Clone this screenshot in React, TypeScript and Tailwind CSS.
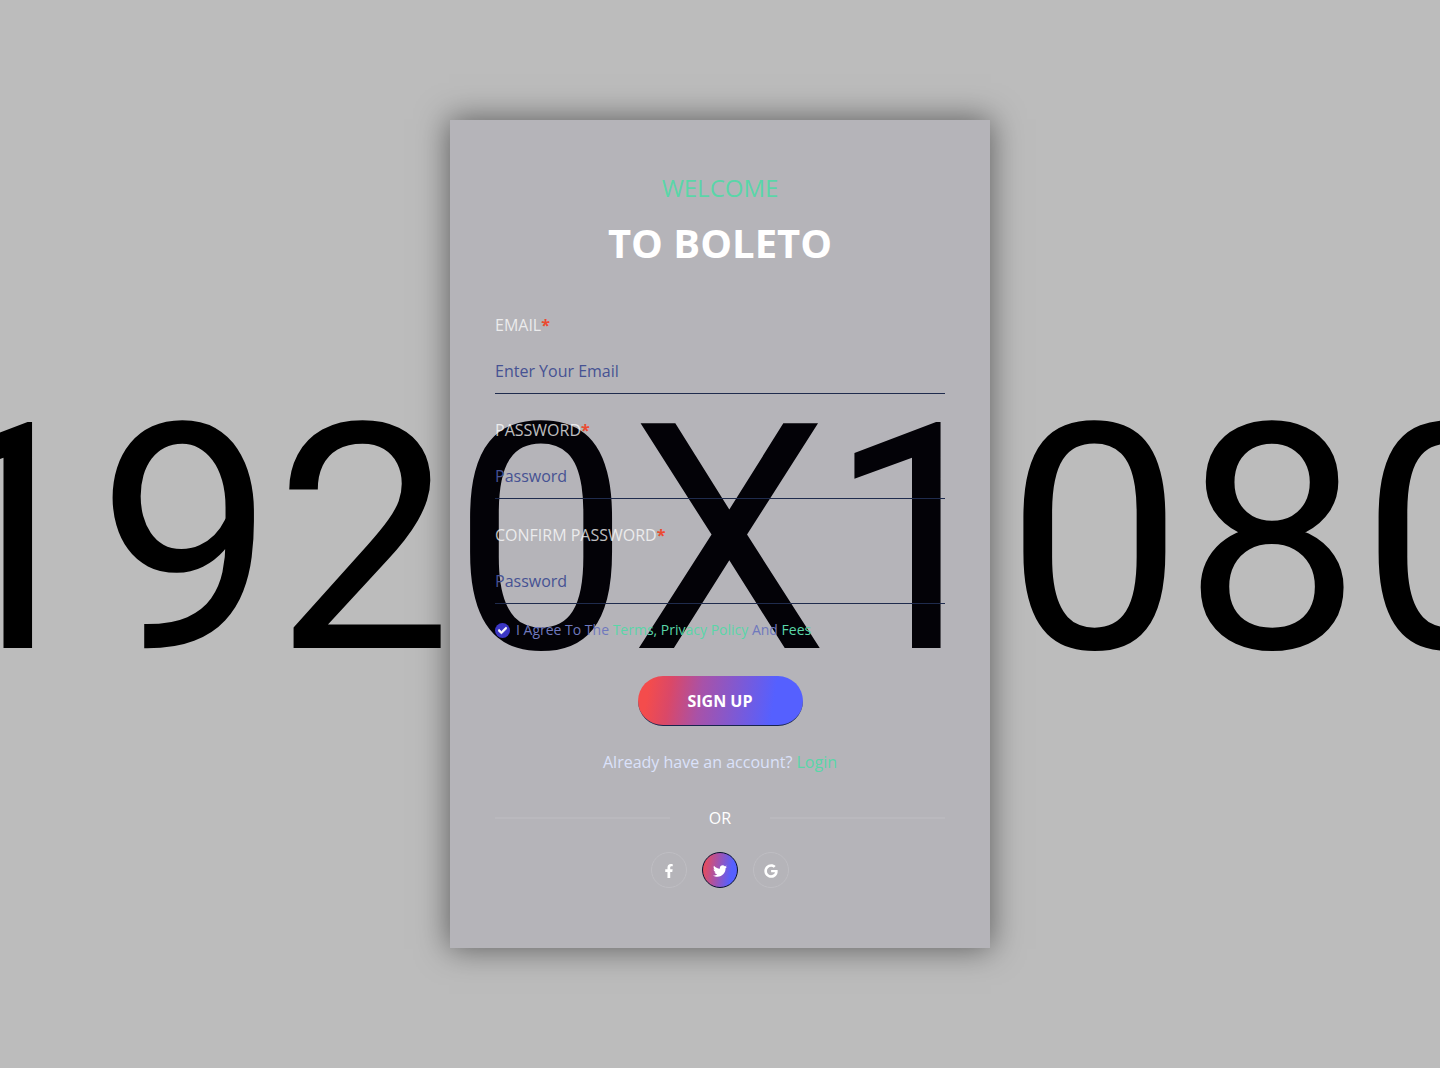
import { FaFacebookF, FaTwitter, FaGoogle, FaCheck } from "react-icons/fa";

const fields = [
  { id: "email", label: "EMAIL", type: "email", placeholder: "Enter Your Email" },
  { id: "password", label: "PASSWORD", type: "password", placeholder: "Password" },
  { id: "confirm", label: "CONFIRM PASSWORD", type: "password", placeholder: "Password" },
];

export default function App() {
  return (
    <main className="relative isolate flex min-h-screen items-center justify-center overflow-hidden bg-[#bcbcbc] py-[120px] font-['Open_Sans',sans-serif] text-base">
      <div
        aria-hidden="true"
        className="absolute inset-0 -z-10 flex items-center justify-center overflow-hidden pt-3 pl-[18px] font-['Roboto',sans-serif] text-[316px] leading-none whitespace-nowrap text-black"
      >
        <span>1920X1080</span>
      </div>

      <section className="w-full max-w-[540px] bg-[rgb(50_30_140/0.05)] px-[45px] pt-[50px] pb-[60px] shadow-[0_0_30px_1px_rgb(0_0_0/0.5)]">
        <header className="text-center">
          <p className="text-2xl leading-9 text-[#5ad6a8]">WELCOME</p>
          <h1 className="mt-3 text-[40px] leading-[50px] font-bold text-white">TO BOLETO</h1>
        </header>

        <form className="mt-[42px]" onSubmit={(e) => e.preventDefault()}>
          {fields.map((f) => (
            <div key={f.id} className="mb-[21px] flex flex-col">
              <label htmlFor={f.id} className="leading-[30px] text-white/75">
                {f.label}
                <span className="font-bold text-[#eb4a30]">*</span>
              </label>
              <input
                id={f.id}
                type={f.type}
                placeholder={f.placeholder}
                className="mt-[9px] h-[45px] w-full border-b border-[#1f2b4d] bg-transparent text-[#465293] outline-none placeholder:text-[#465293]"
              />
            </div>
          ))}

          <div className="-mt-2 flex items-center gap-1.5">
            <span className="relative flex size-[15px] items-center justify-center rounded-full bg-[#3b36c4]">
              <input id="agree" type="checkbox" defaultChecked className="absolute inset-0 size-full cursor-pointer appearance-none" />
              <FaCheck className="pointer-events-none size-[9px] text-white" stroke="currentColor" strokeWidth={40} />
            </span>
            <label htmlFor="agree" className="text-sm leading-[26px] text-[#6f78bd]">
              I Agree To The{" "}
              <a href="#terms" className="text-[#5ad6a8]">Terms, Privacy Policy</a> And{" "}
              <a href="#fees" className="text-[#5ad6a8]">Fees</a>
            </label>
          </div>

          <div className="mt-[33px] flex justify-center">
            <button
              type="submit"
              className="h-[50px] w-[165px] rounded-full border-b border-[#17244d] bg-[linear-gradient(99deg,#f44c4c_7%,#da4868_20%,#a852a8_38%,#5560ff_81%)] font-bold text-white"
            >
              SIGN UP
            </button>
          </div>
        </form>

        <p className="mt-[21px] text-center leading-[30px] text-[#dbe2fb]">
          Already have an account?{" "}
          <a href="#login" className="text-[#5ad6a8]">Login</a>
        </p>

        <div className="mt-[26px] flex items-center text-white">
          <span className="h-0.5 flex-1 bg-[#bab9be]" />
          <span className="w-[100px] text-center leading-[30px]">OR</span>
          <span className="h-0.5 flex-1 bg-[#bab9be]" />
        </div>

        <div className="mt-[19px] flex justify-center gap-[15px] text-sm text-white">
          <a href="#facebook" aria-label="Facebook" className="flex size-9 items-center justify-center rounded-full border border-[#bfbec3] pt-0.5">
            <FaFacebookF />
          </a>
          <a href="#twitter" aria-label="Twitter" className="flex size-9 items-center justify-center rounded-full border border-[#081130] bg-[linear-gradient(99deg,#f44c4c_0%,#a852a8_40%,#5560ff_80%)] pt-0.5">
            <FaTwitter />
          </a>
          <a href="#google" aria-label="Google" className="flex size-9 items-center justify-center rounded-full border border-[#bfbec3] pt-0.5">
            <FaGoogle />
          </a>
        </div>
      </section>
    </main>
  );
}
